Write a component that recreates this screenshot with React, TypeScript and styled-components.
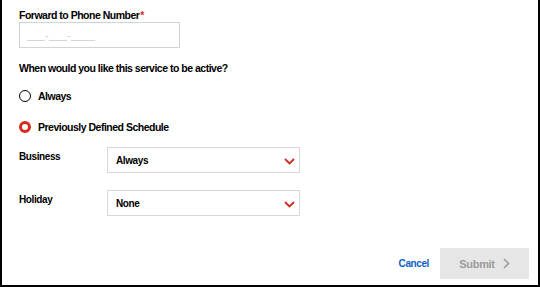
import * as React from "react";
import styled, { createGlobalStyle } from "styled-components";

const GlobalStyle = createGlobalStyle`
  html, body {
    margin: 0;
    padding: 0;
    background: #ffffff;
  }
  * {
    box-sizing: border-box;
  }
`;

const Panel = styled.div`
  width: 540px;
  height: 287px;
  border-left: 2px solid #000;
  border-right: 2px solid #000;
  border-bottom: 2px solid #000;
  padding: 8px 9px 6px 17px;
  display: flex;
  flex-direction: column;
  font-family: "Liberation Sans", Arial, sans-serif;
  color: #000;
  background: #fff;
`;

const FieldLabel = styled.div`
  font-size: 10.5px;
  font-weight: 700;
  letter-spacing: -0.5px;
  line-height: 14px;
  height: 14px;

  .req {
    color: #d52b1e;
    margin-left: 1px;
  }
`;

const PhoneInput = styled.input`
  width: 161px;
  height: 26px;
  border: 1px solid #d3d3d3;
  padding: 0 7px;
  font-family: inherit;
  font-size: 10px;
  outline: none;

  &::placeholder {
    color: #c8c8c8;
    letter-spacing: 0.5px;
  }
`;

const Question = styled(FieldLabel)`
  margin-top: 13px;
`;

const RadioList = styled.div`
  display: flex;
  flex-direction: column;
  gap: 11px;
  margin-top: 11px;
`;

const RadioRow = styled.label`
  display: flex;
  align-items: center;
  height: 20px;
  gap: 7px;
  font-size: 10.5px;
  font-weight: 700;
  letter-spacing: -0.5px;
  cursor: pointer;
`;

const RadioDot = styled.span<{ $checked?: boolean }>`
  width: 12px;
  height: 12px;
  border-radius: 50%;
  border: ${(p) => (p.$checked ? "3.5px solid #d52b1e" : "1.5px solid #000")};
  background: #fff;
  flex: none;
`;

const ScheduleRow = styled.div<{ $top: number }>`
  display: flex;
  align-items: flex-start;
  margin-top: ${(p) => p.$top}px;
`;

const RowLabel = styled.div`
  width: 88px;
  padding-top: 4px;
  font-size: 10px;
  font-weight: 700;
  letter-spacing: -0.4px;
  line-height: 12px;
`;

const SelectBox = styled.div`
  width: 193px;
  height: 26px;
  border: 1px solid #d8d8d8;
  display: flex;
  align-items: center;
  justify-content: space-between;
  padding: 0 4px 0 8px;
  font-size: 10px;
  font-weight: 700;
  letter-spacing: -0.4px;

  svg {
    margin-top: 3px;
  }
`;

const Footer = styled.div`
  margin-top: auto;
  display: flex;
  justify-content: flex-end;
  align-items: center;
  gap: 11px;
`;

const CancelLink = styled.a`
  color: #0b62c4;
  font-size: 10px;
  font-weight: 700;
  letter-spacing: -0.4px;
  text-decoration: none;
  cursor: pointer;
`;

const SubmitButton = styled.button`
  width: 89px;
  height: 31px;
  border: none;
  background: #e6e6e6;
  color: #9b9b9b;
  font-family: inherit;
  font-size: 11px;
  font-weight: 700;
  letter-spacing: -0.3px;
  display: flex;
  align-items: center;
  justify-content: center;
  gap: 8px;
  padding: 0 0 0 0;
`;

const Chevron = () => (
  <svg width="11" height="7" viewBox="0 0 11 7">
    <path d="M1 1l4.5 4.5L10 1" fill="none" stroke="#d52b1e" strokeWidth="1.8" />
  </svg>
);

const ArrowRight = () => (
  <svg width="7" height="11" viewBox="0 0 7 11">
    <path d="M1 1l4.5 4.5L1 10" fill="none" stroke="#9b9b9b" strokeWidth="1.6" />
  </svg>
);

export default function App() {
  return (
    <>
      <GlobalStyle />
      <Panel>
        <FieldLabel>
          Forward to Phone Number<span className="req">*</span>
        </FieldLabel>
        <PhoneInput placeholder="___-___-____" />

        <Question>When would you like this service to be active?</Question>
        <RadioList>
          <RadioRow>
            <RadioDot />
            Always
          </RadioRow>
          <RadioRow>
            <RadioDot $checked />
            Previously Defined Schedule
          </RadioRow>
        </RadioList>

        <ScheduleRow $top={10}>
          <RowLabel>Business</RowLabel>
          <SelectBox>
            <span>Always</span>
            <Chevron />
          </SelectBox>
        </ScheduleRow>
        <ScheduleRow $top={17}>
          <RowLabel>Holiday</RowLabel>
          <SelectBox>
            <span>None</span>
            <Chevron />
          </SelectBox>
        </ScheduleRow>

        <Footer>
          <CancelLink>Cancel</CancelLink>
          <SubmitButton>
            Submit
            <ArrowRight />
          </SubmitButton>
        </Footer>
      </Panel>
    </>
  );
}
